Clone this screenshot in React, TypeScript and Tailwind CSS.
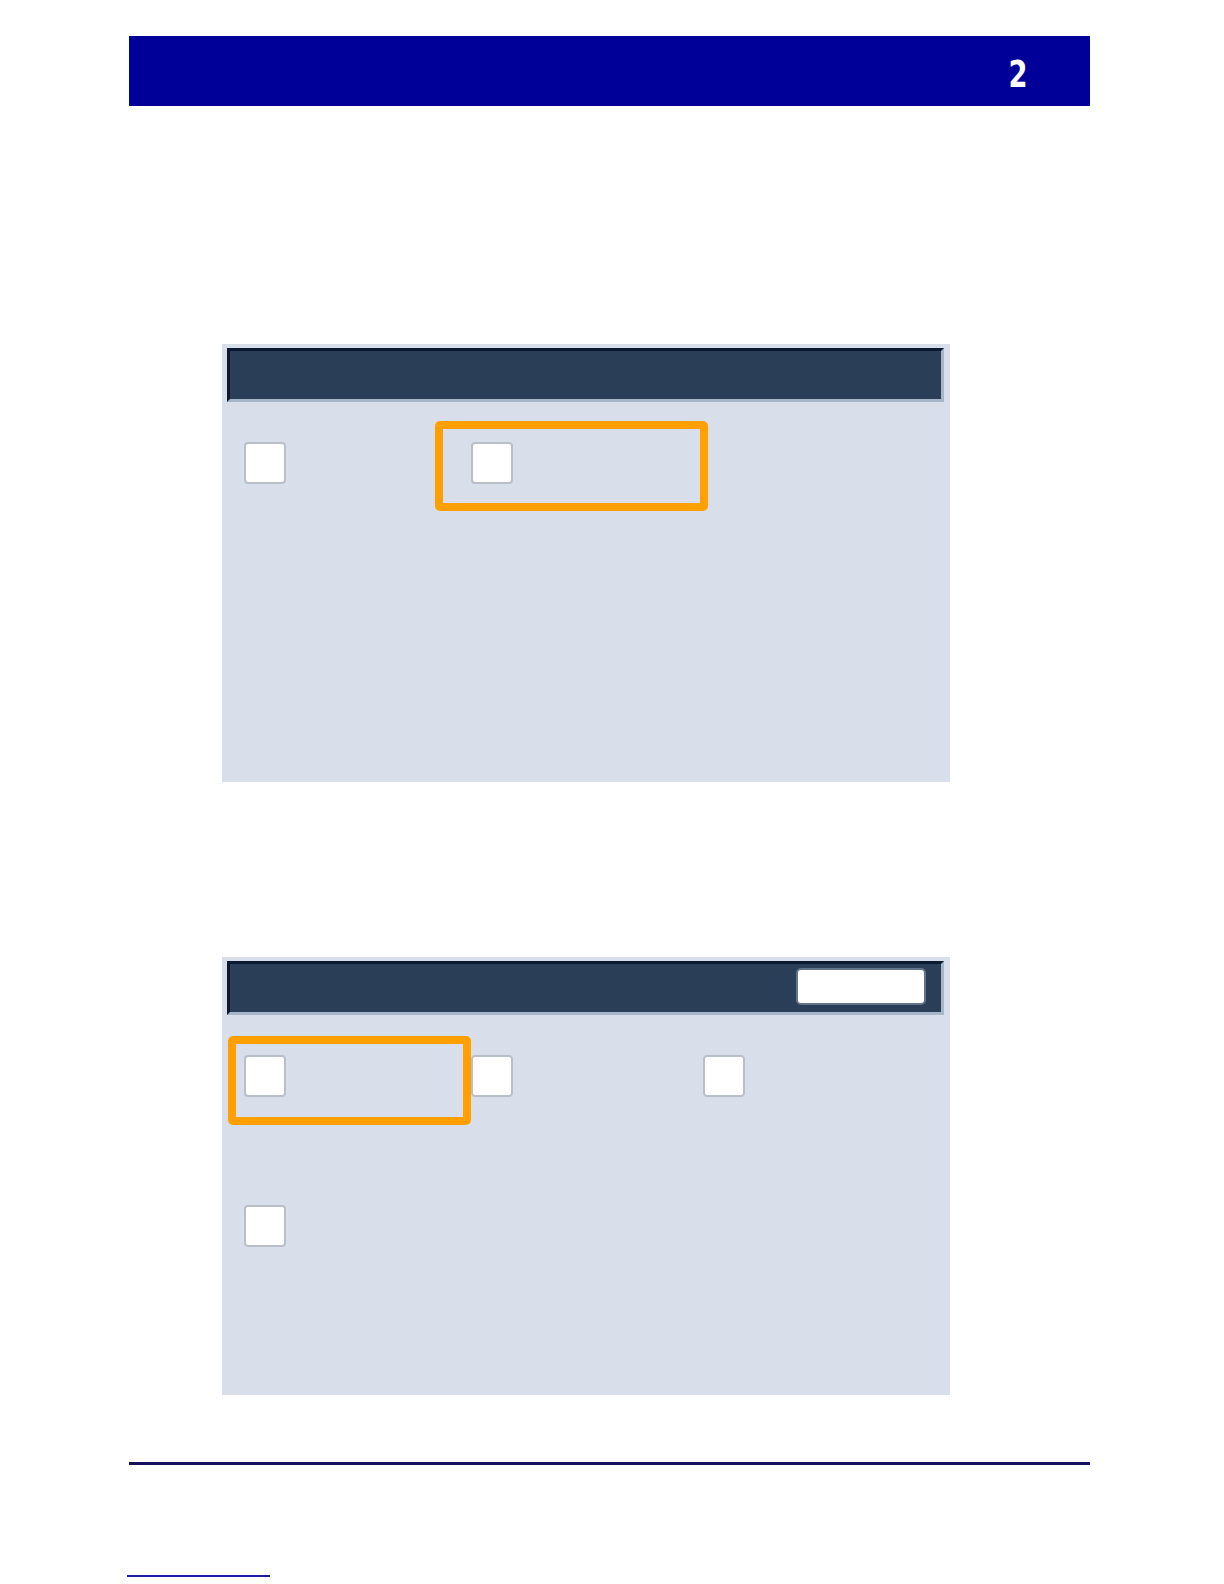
import React from "react";

type Option = {
  id: string;
  highlight?: { className: string };
};

const colWidths = ["w-[227px]", "w-[232px]", "w-[228px]"];

const Checkbox: React.FC = () => (
  <div className="h-[42px] w-[42px] rounded-[4px] border-2 border-[#b9bfc9] bg-white" />
);

const Highlight: React.FC<{ className: string }> = ({ className }) => (
  <div
    className={`pointer-events-none absolute rounded-[5px] border-[8px] border-[#ff9f00] ${className}`}
  />
);

const PanelHeader: React.FC<{ withButton?: boolean }> = ({ withButton }) => (
  <div className="flex h-[54px] items-start justify-end border-t-[3px] border-l-[3px] border-b-[3px] border-r-[3px] border-t-[#0b1a31] border-l-[#0b1a31] border-b-[#a8b6ca] border-r-[#a8b6ca] bg-[#2a3f57] pr-[15px] pt-[4px]">
    {withButton && (
      <div className="h-[37px] w-[130px] rounded-[5px] border-2 border-[#62748e] bg-white" />
    )}
  </div>
);

const Panel: React.FC<{ rows: Option[][]; withButton?: boolean }> = ({
  rows,
  withButton,
}) => (
  <div className="ml-[222px] h-[438px] w-[728px] bg-[#d8dfea] pl-[5px] pr-[6px] pt-[4px]">
    <PanelHeader withButton={withButton} />
    <div className="flex flex-col gap-[108px] pl-[17px] pt-[40px]">
      {rows.map((row, i) => (
        <div key={i} className="flex">
          {row.map((opt, j) => (
            <div key={opt.id} className={`relative ${colWidths[j]}`}>
              {opt.highlight && <Highlight className={opt.highlight.className} />}
              <Checkbox />
            </div>
          ))}
        </div>
      ))}
    </div>
  </div>
);

export default function App() {
  return (
    <div className="min-h-[1584px] w-[1224px] bg-white font-['Liberation_Sans',sans-serif]">
      <div className="pt-[36px]">
        <div className="ml-[129px] mr-[134px] flex h-[70px] items-center justify-end bg-[#000099] pr-[63px]">
          <span className="mt-[5px] inline-block origin-right scale-x-[0.72] font-['DejaVu_Sans',sans-serif] text-[38px] font-bold leading-none text-white">
            2
          </span>
        </div>
      </div>

      <div className="pt-[238px]">
        <Panel
          rows={[
            [
              { id: "a" },
              {
                id: "b",
                highlight: {
                  className: "-left-[36px] -top-[21px] h-[90px] w-[273px]",
                },
              },
            ],
          ]}
        />
      </div>

      <div className="pt-[175px]">
        <Panel
          withButton
          rows={[
            [
              {
                id: "c",
                highlight: {
                  className: "-left-[16px] -top-[19px] h-[89px] w-[243px]",
                },
              },
              { id: "d" },
              { id: "e" },
            ],
            [{ id: "f" }],
          ]}
        />
      </div>

      <div className="ml-[129px] mr-[134px] mt-[67px] h-[3px] bg-[#16105c]" />
      <div className="ml-[127px] mt-[110px] h-[2px] w-[143px] bg-[#1a1aa0]" />
    </div>
  );
}
